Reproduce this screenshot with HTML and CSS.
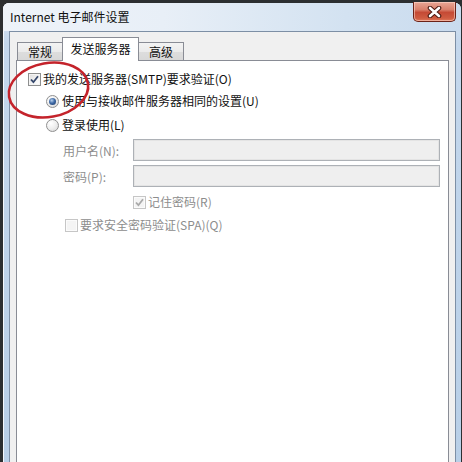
FILE: index.html
```html
<!DOCTYPE html>
<html lang="zh-CN">
<head>
<meta charset="utf-8">
<title>Internet 电子邮件设置</title>
<link rel="stylesheet" href="styles.css">
</head>
<body>
<div class="window">
  <div class="titlebar">
    <span class="title">Internet 电子邮件设置</span>
    <div class="close">
      <svg width="17" height="12" viewBox="0 0 17 12">
        <path d="M4 2 L13 10 M13 2 L4 10" stroke="#4a1810" stroke-width="4.6" stroke-linecap="round"/>
        <path d="M4 2 L13 10 M13 2 L4 10" stroke="#ffffff" stroke-width="2.6" stroke-linecap="round"/>
      </svg>
    </div>
  </div>
  <div class="client">
    <div class="tabs">
      <div class="tab">常规</div>
      <div class="tab active">发送服务器</div>
      <div class="tab">高级</div>
    </div>
    <div class="panel">
      <div class="row r1">
        <span class="cb checked"><svg width="11" height="11" viewBox="0 0 11 11"><path d="M2 5.5 L4.4 8.2 L9 2.2" fill="none" stroke="#34466b" stroke-width="1.8"/></svg></span>
        <span class="lbl">我的发送服务器(SMTP)要求验证(O)</span>
      </div>
      <div class="row r2">
        <span class="radio on"></span>
        <span class="lbl">使用与接收邮件服务器相同的设置(U)</span>
      </div>
      <div class="row r3">
        <span class="radio"></span>
        <span class="lbl">登录使用(L)</span>
      </div>
      <div class="field f1">
        <span class="flabel">用户名(N):</span>
        <span class="input"></span>
      </div>
      <div class="field f2">
        <span class="flabel">密码(P):</span>
        <span class="input"></span>
      </div>
      <div class="row remember">
        <span class="cb dis"><svg width="11" height="11" viewBox="0 0 11 11"><path d="M2 5.5 L4.4 8.2 L9 2.2" fill="none" stroke="#a9a9a9" stroke-width="1.8"/></svg></span>
        <span class="lbl grey">记住密码(R)</span>
      </div>
      <div class="row spa">
        <span class="cb dis"></span>
        <span class="lbl grey">要求安全密码验证(SPA)(Q)</span>
      </div>
    </div>
  </div>
</div>
<svg class="mark" width="462" height="462" viewBox="0 0 462 462">
  <ellipse cx="48.5" cy="90" rx="40" ry="27" transform="rotate(-10 48.5 90)" fill="none" stroke="#c4232b" stroke-width="2.6"/>
</svg>
</body>
</html>
```

FILE: styles.css
```css
* { box-sizing: border-box; }
html, body { margin: 0; padding: 0; }
body {
  width: 462px;
  height: 462px;
  overflow: hidden;
  background: #2c2f31;
  font-family: "Noto Sans CJK SC", "Noto Sans", sans-serif;
  font-size: 12px;
  color: #111;
  position: relative;
}
.window {
  margin: 3px 1px 0 3px;
  width: 458px;
  height: 470px;
  border-radius: 6px 6px 0 0;
  background: linear-gradient(to bottom, #dbe6f2 0px, #c4d7ec 40px, #b8cfe7 100%);
  padding: 0 5px 0 6px;
  box-shadow: inset 1px 1px 0 #f4f8fc;
}
.titlebar {
  height: 28px;
  display: flex;
  align-items: flex-start;
  background: linear-gradient(to right, #eef3f9 0%, #e8eff7 35%, #d3e2f1 75%, #c9dbee 100%);
  margin: 0 -5px 0 -6px;
  padding: 0 5px 0 7px;
  border-radius: 6px 6px 0 0;
}
.title {
  line-height: 28px;
  color: #101010;
  letter-spacing: 0;
}
.close {
  margin-left: auto;
  margin-top: -1px;
  width: 43px;
  height: 20px;
  border: 1px solid #6b2218;
  border-top: none;
  border-radius: 0 0 5px 5px;
  background: linear-gradient(to bottom, #e9a796 0%, #d9806c 40%, #c54a35 55%, #cf5c41 85%, #e07a5c 100%);
  box-shadow: inset 0 0 0 1px rgba(255,220,210,0.55);
  display: flex;
  align-items: center;
  justify-content: center;
}
.client {
  border: 1px solid #7d8fa5;
  background: #f0f0f0;
  padding: 5px 6px 0 6px;
  height: 440px;
}
.tabs {
  display: flex;
  align-items: flex-end;
  height: 24px;
  margin-bottom: -1px;
  margin-left: 1px;
  position: relative;
  z-index: 1;
}
.tab {
  height: 18px;
  margin-bottom: 1px;
  border: 1px solid #898c95;
  border-bottom: none;
  background: linear-gradient(to bottom, #f3f3f3 0%, #ebebeb 50%, #dddddd 51%, #d8d8d8 100%);
  padding: 0 6px;
  line-height: 17px;
  width: 46px;
  text-align: center;
}
.tab + .tab { margin-left: -1px; }
.tab.active {
  height: 24px;
  margin-bottom: 0;
  width: 77px;
  background: #ffffff;
  line-height: 21px;
  position: relative;
  z-index: 2;
}
.tab:last-child { width: 46px; }
.panel {
  background: #ffffff;
  border: 1px solid #898c95;
  height: 420px;
  padding: 7px 0 0 11px;
}
.row {
  display: flex;
  align-items: center;
  height: 22px;
}
.lbl { white-space: nowrap; line-height: 22px; }
.grey { color: #8d8d8d; }
.r1 .lbl { margin-left: 2px; }
.r2 { margin-left: 18px; }
.r3 { margin-left: 18px; margin-top: 2px; }
.r2 .lbl, .r3 .lbl { margin-left: 3px; }
.cb {
  width: 13px;
  height: 13px;
  border: 1px solid #8e8f8f;
  background: linear-gradient(135deg, #dcdcdc 0%, #f4f4f4 60%, #ffffff 100%);
  box-shadow: inset 0 0 0 1px #f4f4f4;
  display: flex;
  align-items: center;
  justify-content: center;
  flex: none;
}
.cb.dis {
  border-color: #c6c6c6;
  background: #f4f4f4;
  box-shadow: inset 0 0 0 1px #fbfbfb;
}
.radio {
  width: 13px;
  height: 13px;
  border-radius: 50%;
  border: 1px solid #8f8f8f;
  background: radial-gradient(circle at 35% 30%, #ffffff 0%, #eeeeee 50%, #d4d4d4 100%);
  flex: none;
  display: flex;
  align-items: center;
  justify-content: center;
}
.radio.on::after {
  content: "";
  width: 7px;
  height: 7px;
  border-radius: 50%;
  background: radial-gradient(circle at 40% 35%, #b9d2ee 0%, #3f6aa6 45%, #1c3864 100%);
}
.field {
  display: flex;
  align-items: center;
  height: 22px;
  margin-left: 35px;
}
.f1 { margin-top: 3px; }
.f2 { margin-top: 4px; }
.flabel {
  width: 70px;
  color: #8d8d8d;
  white-space: nowrap;
}
.input {
  width: 307px;
  height: 22px;
  border: 1px solid #adb1b6;
  background: #efefef;
  box-shadow: inset 0 0 0 1px #e4e4e4;
}
.remember { margin-left: 105px; margin-top: 4px; }
.remember .lbl { margin-left: 2px; }
.spa { margin-left: 37px; margin-top: 1px; }
.spa .lbl { margin-left: 2px; }
.mark {
  position: absolute;
  left: 0;
  top: 0;
  pointer-events: none;
}
```
